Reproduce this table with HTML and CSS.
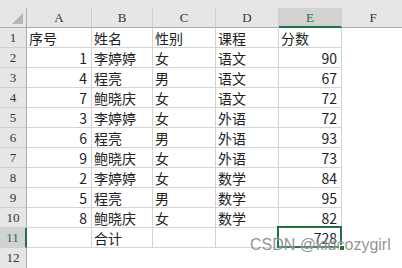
FILE: index.html
```html
<!DOCTYPE html>
<html lang="zh">
<head>
<meta charset="utf-8">
<link rel="stylesheet" href="styles.css">
</head>
<body>
<div class="sheet">
  <div class="strip"></div>
  <div class="hd corner"><span class="tri"></span></div>
  <div class="hd col">A</div>
  <div class="hd col">B</div>
  <div class="hd col">C</div>
  <div class="hd col">D</div>
  <div class="hd col sel-col">E</div>
  <div class="hd col last">F</div>

  <div class="hd row">1</div><div class="c">序号</div><div class="c">姓名</div><div class="c">性别</div><div class="c">课程</div><div class="c">分数</div><div class="c blank"></div>
  <div class="hd row">2</div><div class="c n">1</div><div class="c">李婷婷</div><div class="c">女</div><div class="c">语文</div><div class="c n">90</div><div class="c blank"></div>
  <div class="hd row">3</div><div class="c n">4</div><div class="c">程亮</div><div class="c">男</div><div class="c">语文</div><div class="c n">67</div><div class="c blank"></div>
  <div class="hd row">4</div><div class="c n">7</div><div class="c">鲍晓庆</div><div class="c">女</div><div class="c">语文</div><div class="c n">72</div><div class="c blank"></div>
  <div class="hd row">5</div><div class="c n">3</div><div class="c">李婷婷</div><div class="c">女</div><div class="c">外语</div><div class="c n">72</div><div class="c blank"></div>
  <div class="hd row">6</div><div class="c n">6</div><div class="c">程亮</div><div class="c">男</div><div class="c">外语</div><div class="c n">93</div><div class="c blank"></div>
  <div class="hd row">7</div><div class="c n">9</div><div class="c">鲍晓庆</div><div class="c">女</div><div class="c">外语</div><div class="c n">73</div><div class="c blank"></div>
  <div class="hd row">8</div><div class="c n">2</div><div class="c">李婷婷</div><div class="c">女</div><div class="c">数学</div><div class="c n">84</div><div class="c blank"></div>
  <div class="hd row">9</div><div class="c n">5</div><div class="c">程亮</div><div class="c">男</div><div class="c">数学</div><div class="c n">95</div><div class="c blank"></div>
  <div class="hd row">10</div><div class="c n">8</div><div class="c">鲍晓庆</div><div class="c">女</div><div class="c">数学</div><div class="c n">82</div><div class="c blank"></div>
  <div class="hd row sel-row">11</div><div class="c"></div><div class="c">合计</div><div class="c"></div><div class="c"></div><div class="c n active">728<span class="handle"></span></div><div class="c blank"></div>
  <div class="hd row nob">12</div><div class="c blank"></div><div class="c blank"></div><div class="c blank"></div><div class="c blank"></div><div class="c blank"></div><div class="c blank"></div>
</div>
<div class="watermark">CSDN @kidcozygirl</div>
</body>
</html>
```

FILE: styles.css
```css
* { box-sizing: border-box; }
html, body { margin: 0; padding: 0; background: #fff; }
body { width: 402px; height: 268px; overflow: hidden; position: relative; }

.sheet {
  display: grid;
  grid-template-columns: 27px 65px 61px 63px 63px 63px 62px;
  grid-template-rows: 8px repeat(13, 20px);
  font-family: "Noto Sans CJK SC", "Noto Sans", sans-serif;
  font-size: 14px;
  color: #222;
}

.strip { grid-column: 1 / -1; background: #e6e6e6; }

.hd {
  background: #e6e6e6;
  font-family: "Liberation Serif", serif;
  font-size: 13px;
  color: #333;
  display: flex;
  align-items: center;
  justify-content: center;
}
.hd.col {
  border-right: 1px solid #cfcfcf;
  border-bottom: 1px solid #ababab;
  padding-top: 1px;
}
.hd.col.last { border-right: none; }
.hd.corner {
  border-right: 1px solid #ababab;
  border-bottom: 1px solid #ababab;
  position: relative;
}
.tri {
  position: absolute;
  right: 3px;
  bottom: 3px;
  width: 0; height: 0;
  border-left: 11px solid transparent;
  border-bottom: 11px solid #b7b7b7;
}
.hd.row {
  border-right: 1px solid #ababab;
  border-bottom: 1px solid #cfcfcf;
}
.hd.row.nob { border-bottom: none; }

.sel-col {
  background: #d2d2d2;
  color: #217346;
  border-bottom: 2px solid #217346 !important;
}
.sel-row {
  background: #d2d2d2;
  color: #217346;
  border-right: 2px solid #217346 !important;
}

.c {
  border-right: 1px solid #d4d4d4;
  border-bottom: 1px solid #d4d4d4;
  padding: 0 3px 0 2px;
  display: flex;
  align-items: center;
  line-height: 1;
  white-space: nowrap;
}
.c.n { justify-content: flex-end; padding-right: 4px; }
.c.blank { border: none; }

.active { position: relative; }
.active::after {
  content: "";
  position: absolute;
  left: -2px; top: -2px; right: -1px; bottom: -1px;
  border: 2px solid #217346;
}
.handle {
  position: absolute;
  right: -4px;
  bottom: -4px;
  width: 6px; height: 6px;
  background: #217346;
  border: 1px solid #fff;
  z-index: 2;
}

.watermark {
  position: absolute;
  left: 250px;
  top: 236px;
  font-family: "Liberation Sans", Arial, sans-serif;
  font-size: 16px;
  color: rgba(110, 110, 110, 0.75);
  text-shadow: 0 0 2px rgba(255,255,255,0.9);
  white-space: nowrap;
}
```
